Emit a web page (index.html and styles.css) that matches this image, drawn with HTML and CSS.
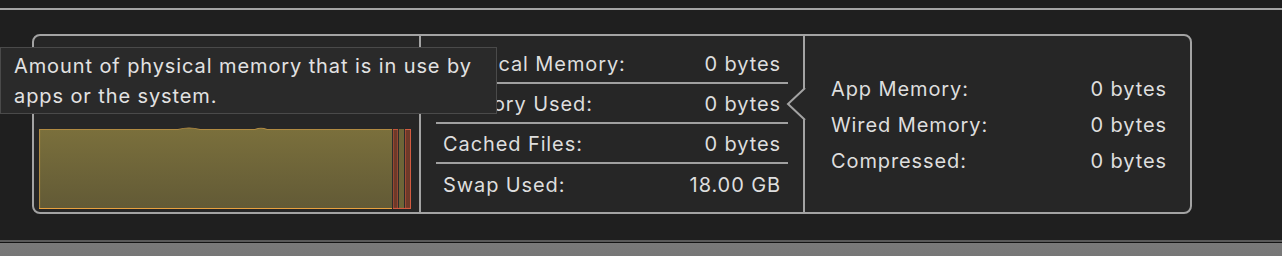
FILE: index.html
```html
<!DOCTYPE html>
<html lang="en">
<head>
<meta charset="utf-8">
<title>Memory Pressure</title>
<link rel="stylesheet" href="styles.css">
</head>
<body>
<div class="window">
  <div class="titlebar"></div>
  <div class="content">
    <div class="panel">
      <section class="graph">
        <svg class="chart" width="372" height="82" viewBox="0 -2 372 82">
          <defs>
            <linearGradient id="olive" x1="0" y1="0" x2="0" y2="1">
              <stop offset="0" stop-color="#7b703c"/>
              <stop offset="1" stop-color="#625a36"/>
            </linearGradient>
          </defs>
          <path d="M0.5 79.5 V0.5 H139 Q150 -2.5 161 0.5 H216 Q222 -2 228 0.5 H353.5 V79.5 Z" fill="url(#olive)"/>
          <path d="M0.5 79.5 V0.5 H139 Q150 -2.5 161 0.5 H216 Q222 -2 228 0.5 H353" fill="none" stroke="#b08a42" stroke-width="1.2"/>
          <rect x="359.5" y="0" width="6" height="80" fill="#6d6538"/>
          <rect x="354" y="0.5" width="5" height="79" fill="#6e3a29" stroke="#c2553c" stroke-width="1"/>
          <rect x="366" y="0.5" width="5.5" height="79" fill="#6e3a29" stroke="#d35b40" stroke-width="1"/>
          <line x1="353.5" y1="0" x2="353.5" y2="80" stroke="#2c2c2c" stroke-width="1"/>
          <line x1="359.5" y1="0" x2="359.5" y2="80" stroke="#2c2c2c" stroke-width="1"/>
          <line x1="365.5" y1="0" x2="365.5" y2="80" stroke="#2c2c2c" stroke-width="1"/>
          <line x1="0" y1="79.5" x2="353" y2="79.5" stroke="#e8a13f" stroke-width="1.2"/>
          <line x1="354" y1="79.5" x2="372" y2="79.5" stroke="#d35b40" stroke-width="1.2"/>
        </svg>
      </section>
      <section class="stats">
        <div class="row"><span>Physical Memory:</span><span>0 bytes</span></div>
        <div class="row"><span>Memory Used:</span><span>0 bytes</span></div>
        <div class="row"><span>Cached Files:</span><span>0 bytes</span></div>
        <div class="row"><span>Swap Used:</span><span>18.00 GB</span></div>
      </section>
      <section class="details">
        <svg class="notch" width="22" height="32" viewBox="0 0 22 32">
          <polygon points="20,0 2,16 20,32 22,32 22,0" fill="#262626"/>
          <polyline points="20,0 19,1 3,16 19,31 20,32" fill="none" stroke="#a3a3a3" stroke-width="2"/>
        </svg>
        <div class="drow"><span>App Memory:</span><span>0 bytes</span></div>
        <div class="drow"><span>Wired Memory:</span><span>0 bytes</span></div>
        <div class="drow"><span>Compressed:</span><span>0 bytes</span></div>
      </section>
    </div>
  </div>
  <div class="statusbar"></div>
</div>
<div class="tooltip">Amount of physical memory that is in use by<br>apps or the system.</div>
</body>
</html>
```

FILE: styles.css
```css
* { box-sizing: border-box; }
html, body { margin: 0; padding: 0; }
body {
  width: 1282px;
  height: 256px;
  overflow: hidden;
  background: #1e1e1e;
  font-family: Inter, "Noto Sans", "Liberation Sans", sans-serif;
  font-size: 20px;
  letter-spacing: 0.9px;
  color: #dedede;
  position: relative;
}
.window {
  display: flex;
  flex-direction: column;
  height: 256px;
}
.titlebar {
  height: 10px;
  background: #1c1c1c;
  border-bottom: 2px solid #a2a2a2;
}
.content {
  flex: 1;
  padding: 24px 0 0 32px;
  background: #1f1f1f;
}
.panel {
  width: 1160px;
  height: 180px;
  border: 2px solid #a3a3a3;
  border-radius: 8px;
  background: #262626;
  display: flex;
}
.graph {
  width: 387px;
  border-right: 2px solid #a3a3a3;
  display: flex;
  align-items: flex-end;
  padding: 0 8px 3px 5px;
}
.chart { display: block; }
.stats {
  width: 382px;
  padding: 8px 15px 0 15px;
  display: flex;
  flex-direction: column;
}
.row {
  height: 40px;
  display: flex;
  justify-content: space-between;
  align-items: center;
  padding: 2px 7px 0 7px;
  border-bottom: 2px solid #a0a0a0;
}
.row:last-child { border-bottom: none; }
.details {
  flex: 1;
  position: relative;
  border-left: 2px solid #a3a3a3;
  padding: 2px 23px 0 26px;
  display: flex;
  flex-direction: column;
  justify-content: center;
}
.notch {
  position: absolute;
  left: -20px;
  top: 52px;
}
.drow {
  height: 36px;
  display: flex;
  justify-content: space-between;
  align-items: center;
}
.statusbar {
  height: 16px;
  border-top: 2px solid #5b5b5b;
  background: linear-gradient(#141414 0 1px, #7a7a7a 1px, #767676);
}
.tooltip {
  position: absolute;
  left: 0;
  top: 47px;
  width: 497px;
  height: 67px;
  padding: 3px 0 0 13px;
  background: #2a2a2a;
  border: 1px solid #4a4a4a;
  line-height: 30px;
  color: #e2e2e2;
}
```
